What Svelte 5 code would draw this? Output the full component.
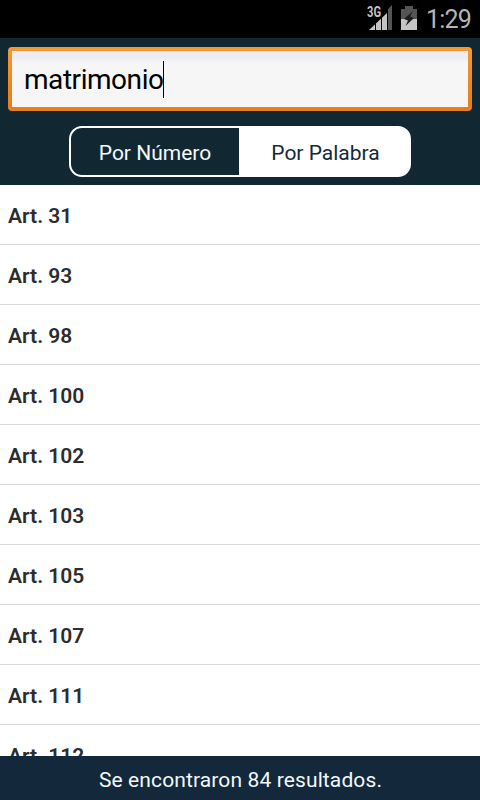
<script>
  const articles = [31, 93, 98, 100, 102, 103, 105, 107, 111, 112];
  let query = $state('matrimonio');
</script>

<main>
  <div class="status">
    <svg class="signal" width="26" height="26" viewBox="0 0 26 26">
      <path d="M2 25 20 8V25Z" fill="#c4c4c4" />
      <path d="M20 5 25 0V25H20Z" fill="#555" />
      <path d="M8.5 15V25M14.5 9V25M20.5 4V25" stroke="#000" stroke-width="1" />
      <text x="0" y="12" textLength="14" lengthAdjust="spacingAndGlyphs">3G</text>
    </svg>
    <svg class="battery" width="16" height="24" viewBox="0 0 16 24">
      <path d="M4 0H12V3H16V13H0V3H4Z" fill="#555" />
      <path d="M0 13H16V24H0Z" fill="#c4c4c4" />
      <path d="M12 5 3 13 7 14.5 4.5 20 13 12 9 10.5Z" fill="#1c1c1c" />
    </svg>
    <span class="clock">1:29</span>
  </div>

  <header>
    <div class="search"><span class="query">{query}</span><span class="caret"></span></div>
    <div class="tabs">
      <button class="number">Por Número</button>
      <button class="word">Por Palabra</button>
    </div>
  </header>

  <ul>
    {#each articles as article}
      <li>Art. {article}</li>
    {/each}
  </ul>

  <footer>Se encontraron 84 resultados.</footer>
</main>

<style>
  main {
    width: 480px;
    height: 800px;
    display: flex;
    flex-direction: column;
    overflow: hidden;
    background: #fff;
    font-family: Roboto, "Liberation Sans", sans-serif;
  }
  .status {
    height: 38px;
    flex: none;
    box-sizing: border-box;
    display: flex;
    justify-content: flex-end;
    padding: 5px 9px 0 0;
    background: #000;
    color: #b4b4b4;
  }
  .signal { margin-right: 8px; }
  .signal text {
    font-size: 14px;
    font-weight: 700;
    fill: #c4c4c4;
    stroke: #000;
    stroke-width: 2px;
    paint-order: stroke;
  }
  .battery { margin: 1px 9px 0 0; }
  .clock {
    font-size: 25px;
    line-height: 30px;
    font-weight: 400;
    letter-spacing: -0.8px;
    width: 45px;
    white-space: nowrap;
  }
  header {
    height: 147px;
    flex: none;
    box-sizing: border-box;
    padding: 9px 8px 0;
    background: #112832;
  }
  .search {
    height: 64px;
    box-sizing: border-box;
    display: flex;
    align-items: center;
    padding-left: 12px;
    border-radius: 4px;
    border: 4px solid transparent;
    background:
      linear-gradient(#f1f0f4, #ebecf1 6px, #f6f6f6 12px, #f6f6f6) padding-box,
      linear-gradient(#f39a38, #f08a20 50%, #e67e1c) border-box;
    font-size: 28px;
    color: #000;
  }
  .query {
    width: 139px;
    letter-spacing: -0.45px;
    white-space: nowrap;
  }
  .caret {
    width: 1px;
    height: 37px;
    background: #000;
  }
  .tabs {
    width: 342px;
    height: 51px;
    box-sizing: border-box;
    display: flex;
    margin: 15px auto 0;
    border: 2px solid #fff;
    border-radius: 13px;
    background: linear-gradient(90deg, #112832 170px, #fff 170px) border-box;
  }
  button {
    border: 0;
    padding: 2px 0 0;
    background: none;
    font: 400 21px Roboto, sans-serif;
    white-space: nowrap;
  }
  .number {
    width: 168px;
    color: #f4faff;
  }
  .word {
    flex: 1;
    padding-left: 3px;
    color: #132a3a;
  }
  ul {
    flex: 1;
    min-height: 0;
    overflow: hidden;
    margin: 0;
    padding: 0;
    list-style: none;
  }
  li {
    height: 60px;
    box-sizing: border-box;
    border-bottom: 1px solid #dadada;
    padding: 2px 8px 0;
    font-size: 21px;
    font-weight: 600;
    line-height: 58px;
    color: #2d2d2d;
  }
  footer {
    height: 44px;
    flex: none;
    box-sizing: border-box;
    padding: 3px 0 0 1px;
    display: flex;
    align-items: center;
    justify-content: center;
    background: #13283b;
    color: #f2f8fc;
    font-size: 21px;
    letter-spacing: 0.12px;
  }
</style>
